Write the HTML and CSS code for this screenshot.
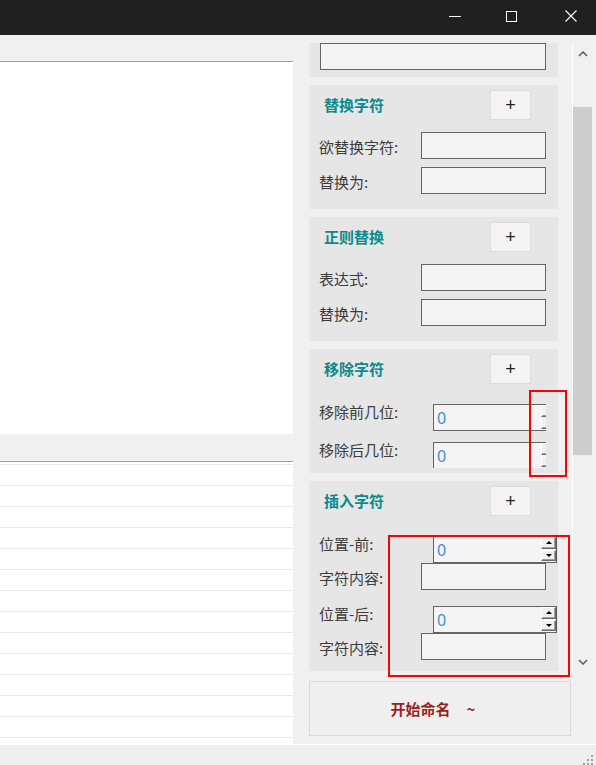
FILE: index.html
```html
<!DOCTYPE html>
<html lang="zh">
<head>
<meta charset="utf-8">
<title>重命名</title>
<link rel="stylesheet" href="styles.css">
</head>
<body>
<div class="window">
  <header class="titlebar">
    <svg class="tb-icon" width="12" height="12" viewBox="0 0 12 12"><line x1="0" y1="6.5" x2="12" y2="6.5" stroke="#fff" stroke-width="1"/></svg>
    <svg class="tb-icon" width="12" height="12" viewBox="0 0 12 12"><rect x="0.5" y="1.5" width="10" height="10" fill="none" stroke="#fff" stroke-width="1"/></svg>
    <svg class="tb-icon tb-close" width="12" height="12" viewBox="0 0 12 12"><path d="M0.5 0.5 L11.5 11.5 M11.5 0.5 L0.5 11.5" stroke="#fff" stroke-width="1.1" fill="none"/></svg>
  </header>

  <main class="main">
    <section class="left">
      <div class="text-area"></div>
      <div class="list-header"></div>
      <div class="list">
        <div class="row"></div><div class="row"></div><div class="row"></div><div class="row"></div>
        <div class="row"></div><div class="row"></div><div class="row"></div><div class="row"></div>
        <div class="row"></div><div class="row"></div><div class="row"></div><div class="row"></div>
        <div class="row"></div><div class="row"></div>
      </div>
    </section>

    <section class="right">
      <div class="scroll">
        <div class="scroll-content">
          <div class="box box-top">
            <div class="inp inp-wide"></div>
          </div>

          <div class="box">
            <div class="box-head"><span class="ttl">替换字符</span><span class="plus">+</span></div>
            <div class="fields">
              <span class="lbl">欲替换字符:</span><div class="inp"></div>
              <span class="lbl">替换为:</span><div class="inp"></div>
            </div>
          </div>

          <div class="box">
            <div class="box-head"><span class="ttl">正则替换</span><span class="plus">+</span></div>
            <div class="fields">
              <span class="lbl">表达式:</span><div class="inp"></div>
              <span class="lbl">替换为:</span><div class="inp"></div>
            </div>
          </div>

          <div class="box box-remove">
            <div class="box-head"><span class="ttl">移除字符</span><span class="plus">+</span></div>
            <div class="fields fields-remove">
              <span class="lbl lbl-spin">移除前几位:</span>
              <div class="clip"><div class="spin"><span class="val">0</span><span class="spin-btns"><span class="sb"><i class="tri-up"></i></span><span class="sb"><i class="tri-down"></i></span></span></div></div>
              <span class="lbl lbl-spin">移除后几位:</span>
              <div class="clip clip-short"><div class="spin"><span class="val">0</span><span class="spin-btns"><span class="sb"><i class="tri-up"></i></span><span class="sb"><i class="tri-down"></i></span></span></div></div>
            </div>
          </div>

          <div class="box box-insert">
            <div class="box-head"><span class="ttl">插入字符</span><span class="plus">+</span></div>
            <div class="insert-groups">
              <div class="fields fields-insert">
                <span class="lbl lbl-spin">位置-前:</span>
                <div class="spin spin-shift"><span class="val">0</span><span class="spin-btns"><span class="sb"><i class="tri-up"></i></span><span class="sb"><i class="tri-down"></i></span></span></div>
                <span class="lbl">字符内容:</span><div class="inp"></div>
              </div>
              <div class="fields fields-insert">
                <span class="lbl lbl-spin">位置-后:</span>
                <div class="spin spin-shift"><span class="val">0</span><span class="spin-btns"><span class="sb"><i class="tri-up"></i></span><span class="sb"><i class="tri-down"></i></span></span></div>
                <span class="lbl">字符内容:</span><div class="inp"></div>
              </div>
            </div>
          </div>
        </div>

        <div class="scrollbar">
          <div class="sb-arrow">
            <svg width="10" height="6" viewBox="0 0 10 6"><polyline points="1,5 5,1 9,5" fill="none" stroke="#606060" stroke-width="1.6"/></svg>
          </div>
          <div class="sb-track"><div class="sb-thumb"></div></div>
          <div class="sb-arrow">
            <svg width="10" height="6" viewBox="0 0 10 6"><polyline points="1,1 5,5 9,1" fill="none" stroke="#606060" stroke-width="1.6"/></svg>
          </div>
        </div>
      </div>

      <button class="start"><span>开始命名</span><span class="tilde">~</span></button>
    </section>
  </main>

  <footer class="status">
    <svg class="grip" width="12" height="12" viewBox="0 0 12 12" fill="#a0a0a0">
      <rect x="9" y="1" width="2" height="2"/>
      <rect x="5" y="5" width="2" height="2"/><rect x="9" y="5" width="2" height="2"/>
      <rect x="1" y="9" width="2" height="2"/><rect x="5" y="9" width="2" height="2"/><rect x="9" y="9" width="2" height="2"/>
    </svg>
  </footer>

  <div class="mark mark-a"></div>
  <div class="mark mark-b"></div>
</div>
</body>
</html>
```

FILE: styles.css
```css
* {
  box-sizing: border-box;
  margin: 0;
  padding: 0;
}

html, body {
  width: 596px;
  height: 765px;
  overflow: hidden;
  background: #f0f0f0;
}

body {
  font-family: "Noto Sans CJK SC", "Noto Sans", sans-serif;
  color: #3c3c3c;
}

.window {
  position: relative;
  width: 596px;
  height: 765px;
  display: flex;
  flex-direction: column;
}

/* title bar */
.titlebar {
  height: 35px;
  flex-shrink: 0;
  background: #202020;
  display: flex;
  justify-content: flex-end;
  align-items: flex-start;
  padding: 10px 19px 0 0;
  gap: 45px;
}

.tb-icon {
  display: block;
}

.tb-close {
  margin-left: 2px;
}

/* main area */
.main {
  height: 709px;
  display: flex;
  overflow: hidden;
}

.left {
  width: 293px;
  flex-shrink: 0;
  display: flex;
  flex-direction: column;
  padding-top: 26px;
}

.text-area {
  height: 373px;
  flex-shrink: 0;
  border-top: 1px solid #a0a0a0;
  background: #fff;
}

.list-header {
  height: 27px;
  flex-shrink: 0;
}

.list {
  flex: 1;
  min-height: 0;
  overflow: hidden;
  background: #fff;
  border-top: 1px solid #a0a0a0;
  padding-top: 2px;
}

.row {
  height: 21px;
  border-top: 1px solid #e8e8e8;
}

/* right panel */
.right {
  flex: 1;
  display: flex;
  flex-direction: column;
  padding-top: 8px;
}

.scroll {
  height: 629px;
  flex-shrink: 0;
  display: flex;
}

.scroll-content {
  width: 279px;
  flex-shrink: 0;
  padding-left: 16px;
  display: flex;
  flex-direction: column;
  gap: 8px;
  overflow: hidden;
}

.box {
  width: 249px;
  flex-shrink: 0;
  background: #e6e6e6;
  height: 124px;
  padding-top: 5px;
}

.box-top {
  height: 34px;
  padding: 0 0 0 11px;
}

.box-insert {
  height: 190px;
}

.box-head {
  height: 30px;
  display: flex;
  align-items: center;
  justify-content: space-between;
  padding: 0 27px 0 15px;
}

.ttl {
  font-size: 15px;
  line-height: 20px;
  font-weight: 700;
  color: #0b8a8c;
}

.plus {
  width: 41px;
  height: 30px;
  display: flex;
  align-items: center;
  justify-content: center;
  background: #f4f4f4;
  border: 1px solid #dcdcdc;
  font-family: "Liberation Sans", sans-serif;
  font-size: 18px;
  line-height: 1;
  color: #222;
  padding-bottom: 1px;
}

.fields {
  display: grid;
  grid-template-columns: 102px 125px;
  grid-auto-rows: 27px;
  row-gap: 8px;
  padding: 12px 0 0 10px;
}

.fields-remove {
  grid-template-columns: 114px 113px;
  grid-template-rows: 27px 26px;
  row-gap: 11px;
  padding-top: 20px;
}

.insert-groups {
  display: flex;
  flex-direction: column;
  gap: 16px;
  padding-top: 20px;
}

.fields-insert {
  grid-template-columns: 102px 137px;
  row-gap: 0;
  padding-top: 0;
}

.lbl {
  font-size: 15px;
  line-height: 15px;
  padding-top: 7px;
  white-space: nowrap;
  color: #3c3c3c;
}

.lbl-spin {
  padding-top: 0;
}

.inp {
  width: 125px;
  height: 27px;
  background: #f4f4f4;
  border: 1px solid #646464;
}

.inp-wide {
  width: 226px;
}

/* spin control */
.clip {
  width: 113px;
  height: 27px;
  overflow: hidden;
}

.clip-short {
  height: 26px;
}

.spin {
  width: 124px;
  height: 27px;
  display: flex;
  align-items: center;
  background: #f4f4f4;
  border: 1px solid #646464;
  border-right-color: #5a5a5a;
  padding-left: 3px;
}

.spin-shift {
  margin-left: 12px;
}

.val {
  font-family: "Noto Sans", sans-serif;
  font-size: 16px;
  line-height: 20px;
  color: #3f8fd6;
}

.spin-btns {
  margin-left: auto;
  align-self: stretch;
  width: 15px;
  display: flex;
  flex-direction: column;
  gap: 1px;
  padding: 0 0 1px 0;
}

.sb {
  flex: 1;
  display: flex;
  align-items: center;
  justify-content: center;
  background: #f0f0f0;
  border-top: 1px solid #fff;
  border-left: 1px solid #fff;
  border-right: 1px solid #696969;
  border-bottom: 1px solid #696969;
  box-shadow: inset -1px -1px 0 #a0a0a0;
}

.tri-up,
.tri-down {
  display: block;
  width: 0;
  height: 0;
  border-left: 3px solid transparent;
  border-right: 3px solid transparent;
}

.tri-up {
  border-bottom: 3px solid #000;
}

.tri-down {
  border-top: 3px solid #000;
}

/* scrollbar */
.scrollbar {
  width: 20px;
  flex-shrink: 0;
  border-left: 1px solid #fff;
  display: flex;
  flex-direction: column;
}

.sb-arrow {
  height: 21px;
  flex-shrink: 0;
  display: flex;
  align-items: center;
  justify-content: center;
}

.sb-arrow svg {
  display: block;
}

.sb-track {
  flex: 1;
  padding-top: 43px;
}

.sb-thumb {
  height: 348px;
  background: #cdcdcd;
}

/* start button */
.start {
  margin: 9px 0 0 16px;
  width: 262px;
  height: 55px;
  flex-shrink: 0;
  background: #efefef;
  border: 1px solid #d9d9d9;
  font-family: "Noto Sans CJK SC", sans-serif;
  font-size: 15px;
  font-weight: 700;
  color: #9a1f22;
  display: flex;
  align-items: center;
  justify-content: center;
  padding-right: 14px;
}

.tilde {
  margin-left: 16px;
}

/* status bar */
.status {
  height: 21px;
  flex-shrink: 0;
  border-top: 1px solid #fff;
  background: #efefef;
  display: flex;
  justify-content: flex-end;
  align-items: flex-end;
  padding: 0 2px 0 0;
}

.grip {
  display: block;
  margin-bottom: -1px;
}

/* annotation overlays */
.mark {
  position: absolute;
  border: 2px solid #f00;
  pointer-events: none;
}

.mark-a {
  left: 529px;
  top: 390px;
  width: 38px;
  height: 87px;
}

.mark-b {
  left: 388px;
  top: 535px;
  width: 182px;
  height: 142px;
}
```
